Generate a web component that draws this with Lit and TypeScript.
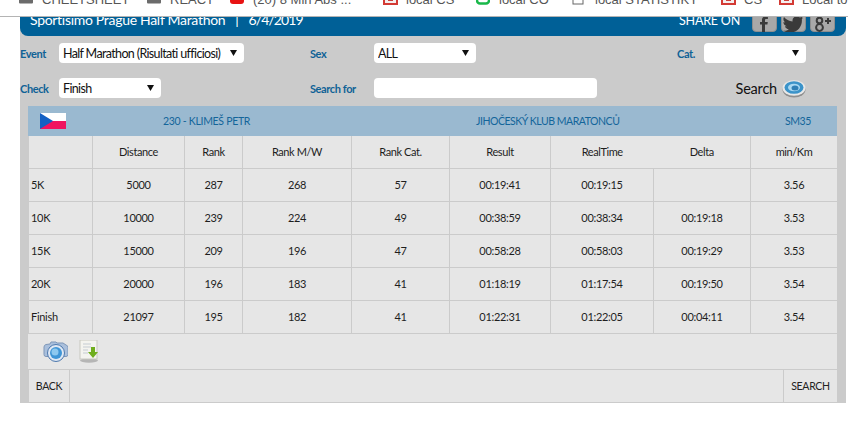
import { LitElement, html, css, svg } from "lit";
import { customElement } from "lit/decorators.js";

const rows = [
  ["5K", "5000", "287", "268", "57", "00:19:41", "00:19:15", "", "3.56"],
  ["10K", "10000", "239", "224", "49", "00:38:59", "00:38:34", "00:19:18", "3.53"],
  ["15K", "15000", "209", "196", "47", "00:58:28", "00:58:03", "00:19:29", "3.53"],
  ["20K", "20000", "196", "183", "41", "01:18:19", "01:17:54", "00:19:50", "3.54"],
  ["Finish", "21097", "195", "182", "41", "01:22:31", "01:22:05", "00:04:11", "3.54"],
];
const widths = [64, 92, 58, 109, 98, 101, 103, 97, 87];

const folder = html`<svg class="bi" viewBox="0 0 14 15"><rect x="0" y="0" width="14" height="13.500" rx="1" fill="#6b6b6b"/></svg>`;
const redBox = html`<svg class="bi wide" viewBox="0 0 15 15"><rect x="1" y="-4" width="13" height="18" fill="#f4eeee" stroke="#d33a34" stroke-width="2"/><rect x="5" y="-4" width="5" height="15" fill="#c9403a"/></svg>`;

const arrow = `url("data:image/svg+xml,%3Csvg xmlns='http://www.w3.org/2000/svg' width='7' height='6'%3E%3Cpath d='M0 0h7L3.500 6z' fill='%23111'/%3E%3C/svg%3E")`;

@customElement("app-root")
export class AppRoot extends LitElement {
  static styles = css`
    :host { display: block; width: 848px; height: 425px; overflow: hidden; background: #fff; font-family: Lato, "Open Sans", sans-serif; color: #1c1c1c; }
    .bookmarks { height: 16px; overflow: hidden; border-bottom: 1px solid #b4b4b4; display: flex; align-items: flex-start; font-family: "Liberation Sans", sans-serif; font-size: 13px; color: #555; box-sizing: content-box; }
    .spacer { width: 19px; flex: none; }
    .bookmark { display: flex; align-items: flex-start; gap: 9px; white-space: nowrap; line-height: 13px; flex: none; margin-top: -7px; }
    .bi { width: 14px; height: 15px; flex: none; display: block; margin-top: -3px; }
    .bi.wide { width: 15px; margin-right: -1px; }
    .page { margin: 0 20px 0 20px; width: 826px; background: #cbcbcb; }
    .head { height: 19px; background: #006097; border-radius: 0 0 8px 8px; display: flex; align-items: flex-start; color: #fff; overflow: hidden; padding-left: 10px; }
    .title { font-size: 14px; line-height: 16px; margin-top: -5px; white-space: pre; flex: 1; letter-spacing: -0.3px; display: flex; gap: 10px; }
    .date { letter-spacing: -0.9px; }
    .share { font-size: 12.5px; line-height: 14px; margin-top: -3px; letter-spacing: -0.2px; }
    .social { display: flex; gap: 4px; margin: 0 11px 0 12px; }
    .social svg { display: block; width: 25px; height: 15px; }
    .form { display: grid; grid-template-columns: 39px 251px 64px 303px 27px 102px; grid-template-rows: 20px 20px; row-gap: 15px; padding: 7px 40px 8px 0; align-items: center; }
    .lbl { font-size: 11px; font-weight: 700; color: #0f6296; letter-spacing: -0.4px; }
    select { appearance: none; display: block; height: 20px; border: none; border-radius: 4px; background: #fff no-repeat right 7px center; font: 12.5px Lato, sans-serif; letter-spacing: -0.65px; color: #111; padding: 0 0 0 4px; outline: none; box-sizing: border-box; }
    .ev { width: 185px; } .s1 { width: 102px; }
    .txt { display: block; width: 223px; height: 20px; border: none; border-radius: 4px; background: #fff; padding: 0; }
    .searchbtn { grid-column: 5 / 7; display: flex; justify-content: flex-end; align-items: center; gap: 5px; font-size: 14.5px; color: #111; letter-spacing: -0.2px; }
    .searchbtn svg { width: 24px; height: 19px; display: block; }
    .content { margin: 0 9px 0 8px; }
    .namebar { height: 30px; background: #9ab9d0; display: grid; grid-template-columns: 135px 313px 309px 1fr; align-items: center; font-size: 10.5px; color: #13659a; letter-spacing: -0.46px; }
    .runner { letter-spacing: -0.3px; }
    .flag { margin-left: 12px; width: 26px; height: 16px; display: block; }
    table { border-collapse: collapse; table-layout: fixed; width: 809px; background: #e6e6e6; font-size: 11px; letter-spacing: -0.3px; color: #1e1e1e; }
    td, th { border: 1px solid #cbcbcb; border-top: none; text-align: center; padding: 0; font-weight: 400; height: 33px; box-sizing: border-box; }
    th { height: 32px; letter-spacing: -0.4px; }
    td:first-child { text-align: left; padding-left: 2px; }
    .nr { border-right: none; }
    .nl { border-left: none; }
    .iconrow { height: 29px; background: #e6e6e6; border-bottom: 1px solid #cbcbcb; display: flex; align-items: flex-start; padding: 6px 0 0 15px; box-sizing: content-box; gap: 11px; }
    .iconrow svg { display: block; }
    .foot { height: 32px; background: #e6e6e6; border-bottom: 1px solid #cbcbcb; border-left: 1px solid #cbcbcb; display: flex; align-items: center; font-size: 10.5px; color: #222; letter-spacing: -0.3px; }
    .foot div { height: 100%; display: flex; align-items: center; justify-content: center; }
    .back { width: 40px; border-right: 1px solid #cbcbcb; }
    .mid { flex: 1; }
    .srch { width: 53px; border-left: 1px solid #cbcbcb; }
  `;

  render() {
    const bm = (icon: unknown, label: string, w: number) =>
      html`<div class="bookmark" style="width:${w}px">${icon}<span>${label}</span></div>`;
    const arrowStyle = `background-image:${arrow}`;
    return html`
      <div class="bookmarks">
        <div class="spacer"></div>
        ${bm(folder, "CHEETSHEET", 128)}
        ${bm(folder, "REACT", 83)}
        ${bm(html`<svg class="bi" viewBox="0 0 14 15"><rect x="0" y="-6" width="14" height="20" rx="3" fill="#e81212"/></svg>`, "(20) 8 Min Abs ...", 153)}
        ${bm(redBox, "local CS", 93)}
        ${bm(html`<svg class="bi" viewBox="0 0 14 15"><rect x="1" y="-6" width="12" height="19.500" rx="3" fill="#fff" stroke="#19b84a" stroke-width="2.500"/></svg>`, "local CO", 96)}
        ${bm(html`<svg class="bi" viewBox="0 0 14 15"><rect x="1" y="-4" width="10" height="18" fill="#fff" stroke="#666"/></svg>`, "local STATISTIKY", 149)}
        ${bm(redBox, "CS", 58)}
        ${bm(redBox, "Local to", 60)}
      </div>
      <div class="page">
        <div class="head">
          <div class="title"><span>Sportisimo Prague Half Marathon</span><span>|</span><span class="date">6/4/2019</span></div>
          <div class="share">SHARE ON</div>
          <div class="social">
            ${this.social(svg`<path d="M13 15V7.500h2.400l.4-2.600H13V3.400c0-.8.3-1.300 1.400-1.300h1.500V-.5h-2.400C11 -.5 10 1 10 3v1.900H8v2.600h2V15z" fill="#3a3a3a"/>`)}
            ${this.social(svg`<path d="M21 0c-.7.3-1.400.5-2.200.6-.8-.8-1.900-1.300-3.100-1.300-2.300 0-4.200 1.900-4.200 4.200 0 .3 0 .6.100.9C8 4.200 5 2.600 3 0c-.4.600-.6 1.300-.6 2.100 0 1.500.7 2.700 1.900 3.500-.7 0-1.300-.2-1.900-.5 0 2 1.400 3.700 3.400 4.100-.7.2-1.300.2-1.900.1.500 1.700 2.100 2.900 3.900 2.900-1.500 1.200-3.300 1.800-5.200 1.600 1.900 1.200 4 1.800 6.400 1.800 7.700 0 11.900-6.400 11.900-11.900V3.100C20.500 2.500 21.100 1.800 21.600.9z" fill="#3a3a3a"/>`)}
            ${this.social(svg`<g fill="none" stroke="#3a3a3a" stroke-width="2"><circle cx="9.500" cy="10.500" r="3.400"/><circle cx="9.500" cy="3.500" r="2.800"/></g><path d="M18 1v6M15 4h6" stroke="#3a3a3a" stroke-width="2"/>`)}
          </div>
        </div>
        <div class="form">
          <div class="lbl">Event</div>
          <div><select class="ev" style=${arrowStyle}><option>Half Marathon (Risultati ufficiosi)</option></select></div>
          <div class="lbl">Sex</div>
          <div><select class="s1" style=${arrowStyle}><option>ALL</option></select></div>
          <div class="lbl">Cat.</div>
          <div><select class="s1" style=${arrowStyle}><option></option></select></div>
          <div class="lbl">Check</div>
          <div><select class="s1" style=${arrowStyle}><option>Finish</option></select></div>
          <div class="lbl">Search for</div>
          <div><input class="txt" type="text" /></div>
          <div class="searchbtn">Search
            <svg viewBox="0 0 24 19">
              <ellipse cx="12" cy="10.500" rx="11.500" ry="8" fill="#8f8f8f"/>
              <ellipse cx="12" cy="9" rx="11.500" ry="7.800" fill="#e8e8e8"/>
              <ellipse cx="12" cy="8.500" rx="9.500" ry="6.300" fill="#3b93c9"/>
              <ellipse cx="12" cy="8.500" rx="6" ry="3.800" fill="#a9d8f2"/>
              <ellipse cx="13" cy="9" rx="3.500" ry="2.500" fill="#2f7fb5"/>
            </svg>
          </div>
        </div>
        <div class="content">
          <div class="namebar">
            <svg class="flag" viewBox="0 0 26 16"><rect width="26" height="8" fill="#fff"/><rect y="8" width="26" height="8" fill="#f01460"/><path d="M0 0L13 8L0 16z" fill="#1360c4"/></svg>
            <div class="runner">230 - KLIMEŠ PETR</div>
            <div>JIHOČESKÝ KLUB MARATONCŮ</div>
            <div>SM35</div>
          </div>
          <table>
            <colgroup>${widths.map((w) => html`<col style="width:${w}px" />`)}</colgroup>
            <tr>
              <th></th><th>Distance</th><th>Rank</th><th>Rank M/W</th><th>Rank Cat.</th><th>Result</th>
              <th class="nr">RealTime</th><th class="nl">Delta</th><th>min/Km</th>
            </tr>
            ${rows.map((r) => html`<tr>${r.map((c) => html`<td>${c}</td>`)}</tr>`)}
          </table>
          <div class="iconrow">
            <svg width="25" height="23" viewBox="0 0 25 23">
              <path d="M1 7q0-2 2-2.500l4-.5 1-2h5l1 1h6l3 2q2 .5 2 2.500v7q0 2-2 2H3q-2 0-2-2z" fill="#a9bfdc" stroke="#7f97b8"/>
              <circle cx="13" cy="13" r="8.500" fill="#dfe8f4" stroke="#4d78ad"/>
              <circle cx="13" cy="13" r="6" fill="#3f95d6"/>
              <circle cx="12" cy="12" r="3.500" fill="#8dc8ef"/>
            </svg>
            <svg width="20" height="23" viewBox="0 0 20 23">
              <ellipse cx="10" cy="20.500" rx="9" ry="2.200" fill="#b5b5b5"/>
              <rect x="1" y="0" width="17" height="19" fill="#f4f4ef" stroke="#c8c8c0"/>
              <path d="M4 4h8M4 7h8M4 10h5M4 13h5" stroke="#c5ccd2"/>
              <path d="M12 7h4v5h3l-5 6-5-6h3z" fill="#6fae1d"/>
            </svg>
          </div>
          <div class="foot">
            <div class="back">BACK</div>
            <div class="mid"></div>
            <div class="srch">SEARCH</div>
          </div>
        </div>
      </div>
    `;
  }

  private social(icon: unknown) {
    return html`<svg viewBox="0 0 25 15"><rect x=".5" y="-5" width="24" height="19.500" rx="3.500" fill="#a8a8a8" stroke="#8e8e8e"/>${icon}</svg>`;
  }
}
